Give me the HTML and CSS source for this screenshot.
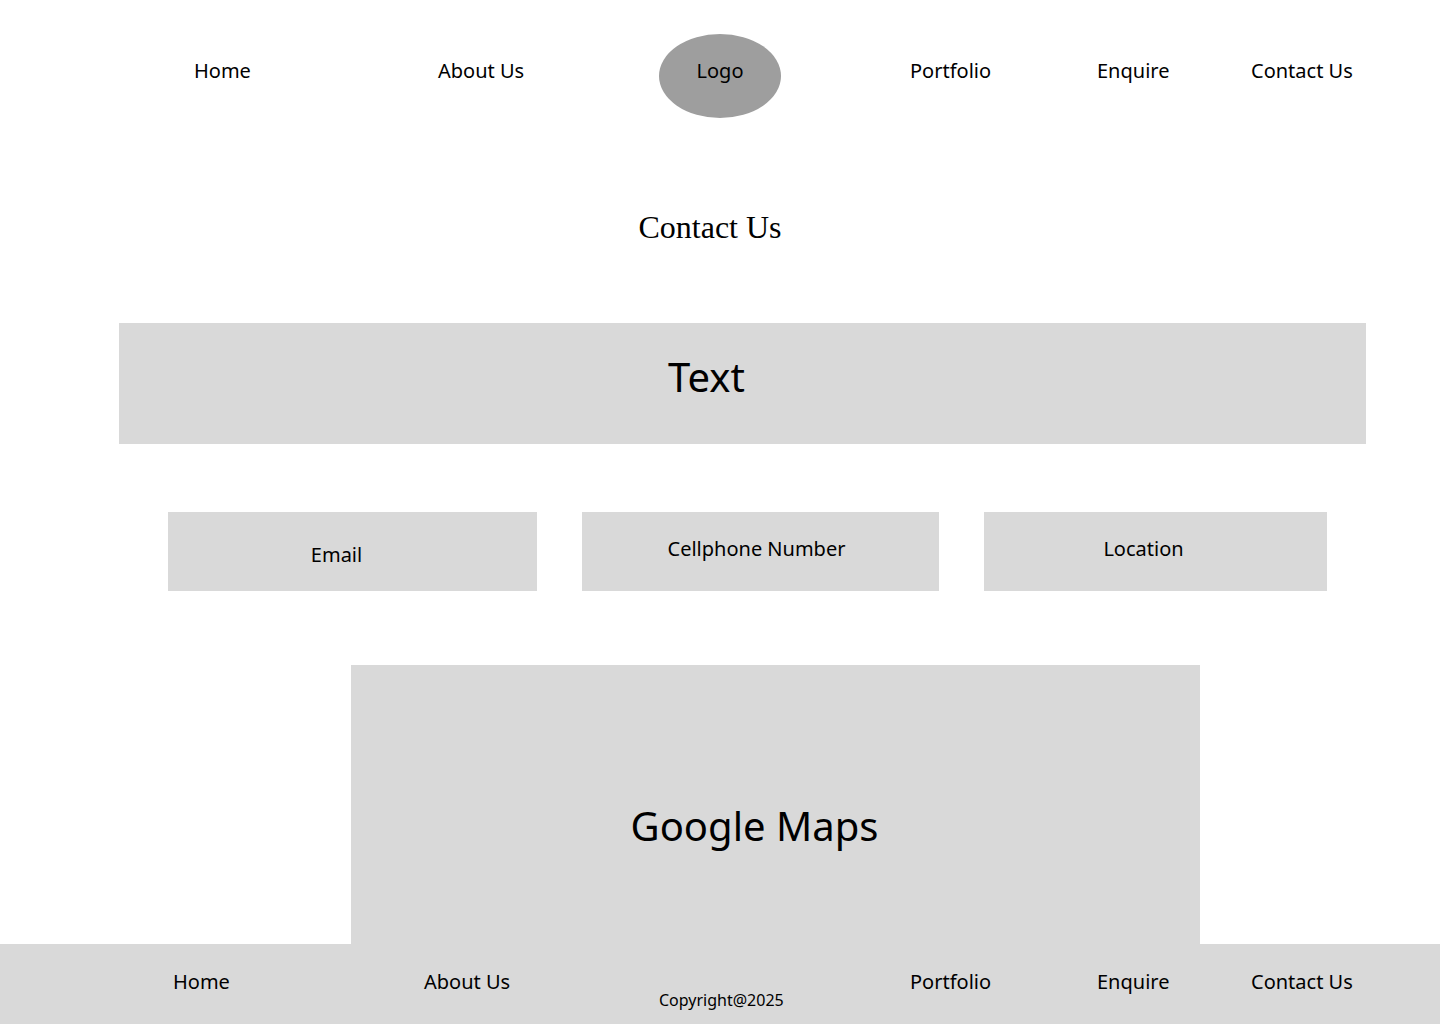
FILE: index.html
```html
<!DOCTYPE html>
<html lang="en">
<head>
  <meta charset="utf-8">
  <meta name="viewport" content="width=device-width, initial-scale=1">
  <title>Contact Us</title>
  <link rel="stylesheet" href="styles.css">
</head>
<body>
  <header>
    <nav class="site-nav" aria-label="Main">
      <a class="first" href="#">Home</a>
      <a href="#">About Us</a>
      <a class="logo" href="#">Logo</a>
      <a href="#">Portfolio</a>
      <a href="#">Enquire</a>
      <a href="#">Contact Us</a>
    </nav>
  </header>
  <main>
    <h1>Contact Us</h1>
    <section class="panel intro">
      <p>Text</p>
    </section>
    <div class="details">
      <section class="panel email"><p>Email</p></section>
      <section class="panel phone"><p>Cellphone Number</p></section>
      <section class="panel location"><p>Location</p></section>
    </div>
    <section class="panel map">
      <p>Google Maps</p>
    </section>
  </main>
  <footer>
    <nav class="footer-nav" aria-label="Footer">
      <a class="first" href="#">Home</a>
      <a href="#">About Us</a>
      <small>Copyright@2025</small>
      <a href="#">Portfolio</a>
      <a href="#">Enquire</a>
      <a href="#">Contact Us</a>
    </nav>
  </footer>
</body>
</html>
```
FILE: styles.css
```css
* {
  box-sizing: border-box;
}

body {
  margin: 0;
  min-height: 100vh;
  display: flex;
  flex-direction: column;
  background: #fff;
  color: #000;
  font: 20px/28px "Noto Sans", sans-serif;
}

h1,
p {
  margin: 0;
}

a {
  color: inherit;
  text-decoration: none;
}

.site-nav,
.footer-nav {
  display: grid;
}

.site-nav {
  grid-template-columns: 194fr 244fr 221fr 251fr 187fr 154fr 189fr;
  align-items: baseline;
  padding-top: 34px;
}

.first {
  grid-column: 2;
}

.logo {
  width: 122px;
  padding: 23px 0 33px;
  border-radius: 50%;
  background: #9e9e9e;
  text-align: center;
}

main {
  flex: 1;
  display: flex;
  flex-direction: column;
}

h1 {
  margin-top: 89px;
  padding-right: 20px;
  font: 32px/40px "Liberation Serif", serif;
  text-align: center;
}

.panel {
  background: #d9d9d9;
  text-align: center;
}

.intro,
.map {
  font-size: 40px;
  line-height: 56px;
}

.intro {
  margin: 76px 74px 0 119px;
  padding: 26px 72px 39px 0;
}

.details {
  display: grid;
  grid-template-columns: 369fr 357fr 343fr;
  gap: 45px;
  margin: 68px 113px 0 168px;
}

.email {
  padding: 29px 32px 22px 0;
}

.phone {
  padding: 23px 8px 28px 0;
}

.location {
  padding: 23px 24px 28px 0;
}

.map {
  flex: 1;
  margin: 74px 240px 0 351px;
  padding: 133px 42px 90px 0;
}

footer {
  background: #d9d9d9;
}

.footer-nav {
  grid-template-columns: 173fr 251fr 235fr 251fr 187fr 154fr 189fr;
  padding: 24px 0 12px;
}

small {
  padding-top: 20px;
  font-size: 16px;
  line-height: 24px;
}
```
